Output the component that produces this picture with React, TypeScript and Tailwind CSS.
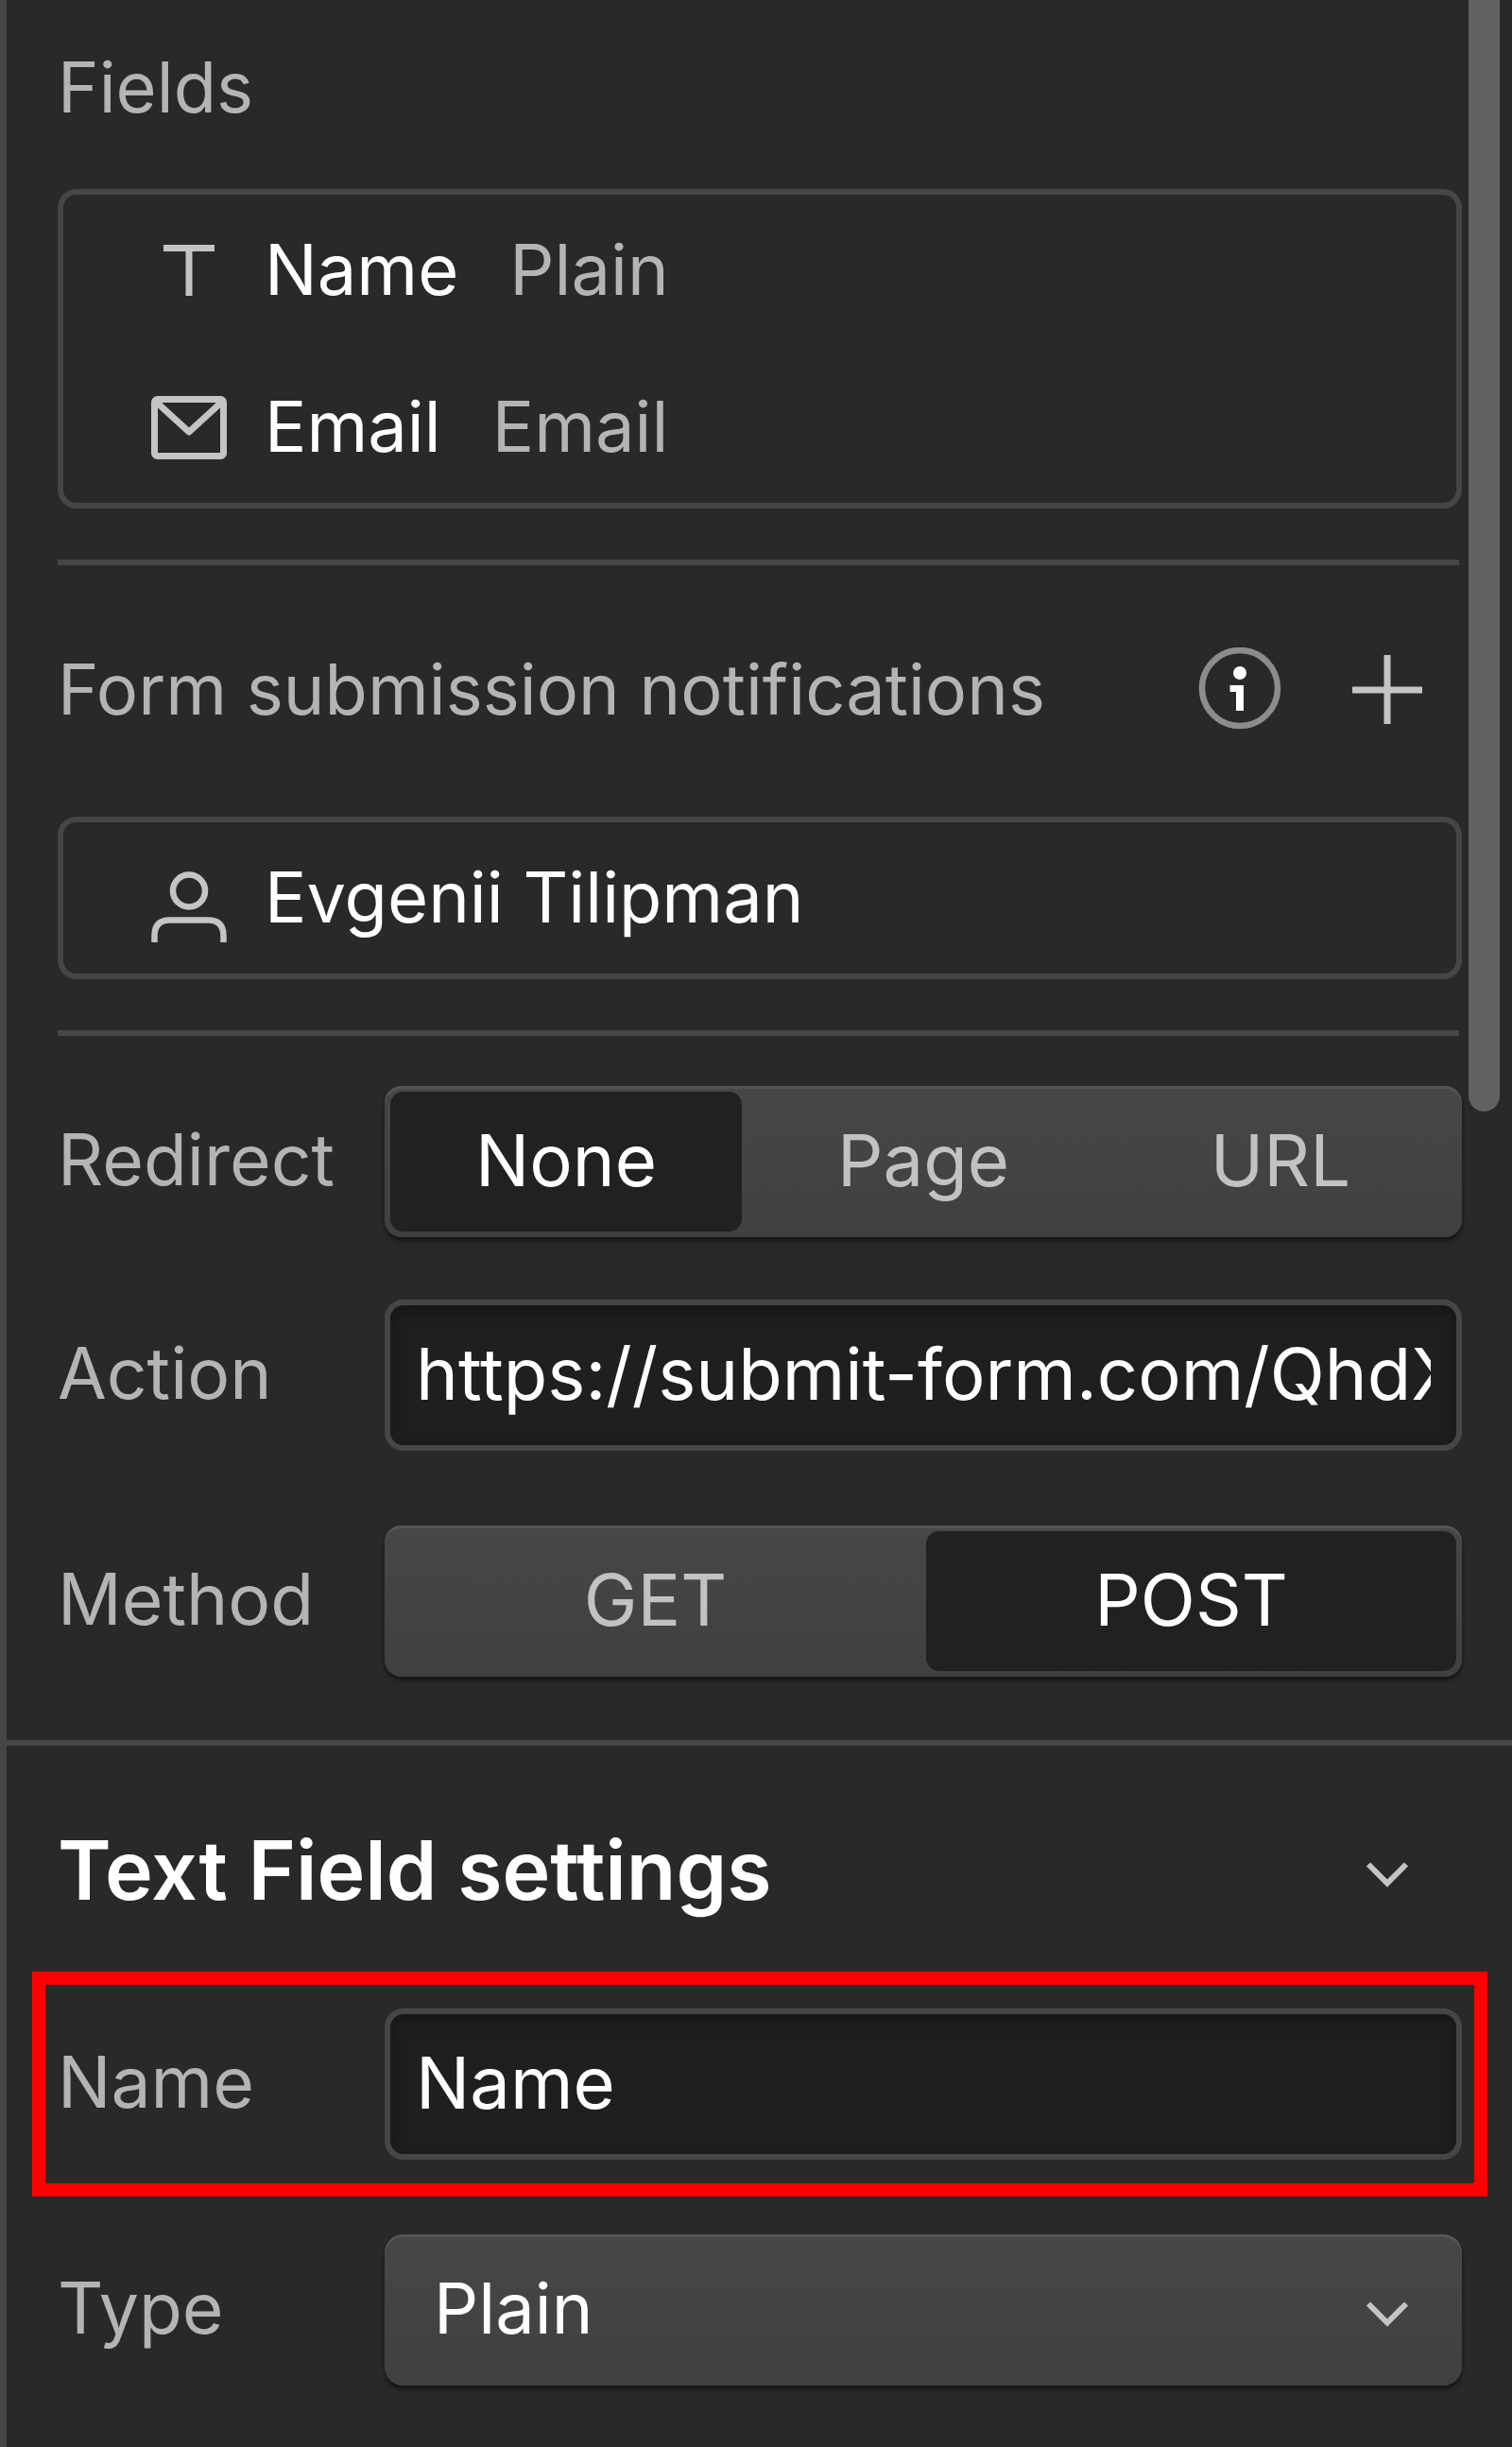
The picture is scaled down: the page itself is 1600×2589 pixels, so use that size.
import { useState } from "react";
import type { ReactNode } from "react";

const TypeIcon = () => (
  <svg width="80" height="96" viewBox="0 0 80 96" fill="#c4c4c4" aria-hidden="true">
    <rect x="13" y="22" width="54" height="7" />
    <rect x="36.5" y="22" width="7" height="54" />
  </svg>
);

const MailIcon = () => (
  <svg width="80" height="96" viewBox="0 0 80 96" fill="none" stroke="#c4c4c4" strokeWidth="7" aria-hidden="true">
    <rect x="3.5" y="19.5" width="73" height="60" rx="3" />
    <path d="M5 22 L40 54 L75 22" strokeLinejoin="round" />
  </svg>
);

const UserIcon = () => (
  <svg width="80" height="96" viewBox="0 0 80 96" fill="none" stroke="#c4c4c4" strokeWidth="6.5" aria-hidden="true">
    <circle cx="40" cy="41.5" r="17" />
    <path d="M3.5 96 V89 Q3.5 72.5 20 72.5 H60 Q76.5 72.5 76.5 89 V96" />
  </svg>
);

const InfoIcon = () => (
  <svg width="88" height="88" viewBox="0 0 88 88" aria-hidden="true">
    <circle cx="44" cy="43" r="40" fill="none" stroke="#8c8c8c" strokeWidth="6.5" />
    <circle cx="44" cy="27" r="7" fill="#fff" />
    <path d="M33.5 40 H48 V67 H40 V47 H33.5 Z" fill="#fff" />
  </svg>
);

const PlusIcon = () => (
  <svg width="74" height="74" viewBox="0 0 74 74" fill="none" stroke="#c4c4c4" strokeWidth="7" aria-hidden="true">
    <path d="M0 38 H74 M37 1 V74" />
  </svg>
);

const ChevronIcon = () => (
  <svg width="46" height="38" viewBox="0 0 46 38" fill="none" stroke="#c4c4c4" strokeWidth="6" aria-hidden="true">
    <path d="M3 12.5 L23 32.5 L43 12.5" />
  </svg>
);

const List = ({ children }: { children: ReactNode }) => (
  <ul className="rounded-[20px] pt-0.5 pb-1 shadow-[inset_0_0_0_6px_#464646]">{children}</ul>
);

const ListItem = ({ icon, name, type }: { icon: ReactNode; name: string; type?: string }) => (
  <li className="flex h-[166px] items-center pl-[99px]">
    {icon}
    <span className="ml-10 text-white">{name}</span>
    {type && <span className="ml-[54px]">{type}</span>}
  </li>
);

const Divider = () => <hr className="mt-[54px] mr-[3px] border-t-6 border-[#464646]" />;

interface FieldRowProps {
  label: string;
  htmlFor?: string;
  children: ReactNode;
}

const FieldRow = ({ label, htmlFor, children }: FieldRowProps) => (
  <div className="flex items-center">
    {htmlFor ? (
      <label htmlFor={htmlFor} className="w-[346px] shrink-0 pb-1 text-[75px]">
        {label}
      </label>
    ) : (
      <span className="w-[346px] shrink-0 pb-1 text-[75px]">{label}</span>
    )}
    {children}
  </div>
);

interface SegmentedProps {
  label: string;
  options: string[];
  value: string;
  onChange: (value: string) => void;
}

const Segmented = ({ label, options, value, onChange }: SegmentedProps) => (
  <div
    role="group"
    aria-label={label}
    className="flex h-40 min-w-0 flex-1 gap-1.5 rounded-[18px] bg-linear-to-b from-[#474747] to-[#404040] p-1.5 text-[76px] shadow-[inset_0_3px_0_#555555,0_4px_4px_#161616]"
  >
    {options.map((option) => (
      <button
        key={option}
        type="button"
        aria-pressed={option === value}
        onClick={() => onChange(option)}
        className={
          option === value
            ? "flex-1 rounded-[14px] bg-[#212121] pb-1 text-white"
            : "flex-1 rounded-[14px] pb-1 text-[#c2c2c2]"
        }
      >
        {option}
      </button>
    ))}
  </div>
);

const TextInput = ({ id, defaultValue }: { id: string; defaultValue: string }) => (
  <input
    id={id}
    type="text"
    defaultValue={defaultValue}
    className="h-40 min-w-0 flex-1 rounded-[20px] border-6 border-[#464646] bg-[#1f1f1f] px-[27px] pb-1 text-[76px] text-white shadow-[inset_0_6px_16px_#161616] outline-none"
  />
);

const App = () => {
  const [redirect, setRedirect] = useState("None");
  const [method, setMethod] = useState("POST");

  return (
    <main className="relative min-h-screen border-l-7 border-[#464646] bg-[#292929] font-['Inter',sans-serif] text-[74px] leading-[96px] text-[#b4b4b4]">
      {/* scrollbar thumb */}
      <div className="absolute top-0 right-[13px] h-[1176px] w-[33px] rounded-b-full bg-[#616161]" />

      <section className="border-b-6 border-[#464646] pr-[53px] pb-[67px] pl-[54px]">
        <h2 className="mb-4 flex h-[184px] items-center">Fields</h2>
        <List>
          <ListItem icon={<TypeIcon />} name="Name" type="Plain" />
          <ListItem icon={<MailIcon />} name="Email" type="Email" />
        </List>
        <Divider />

        <div className="mb-1 flex h-[262px] items-center pr-[42px]">
          <h2 className="flex-1">Form submission notifications</h2>
          <button type="button" aria-label="About notifications">
            <InfoIcon />
          </button>
          <button type="button" aria-label="Add notification" className="ml-[75px]">
            <PlusIcon />
          </button>
        </div>
        <List>
          <ListItem icon={<UserIcon />} name="Evgenii Tilipman" />
        </List>
        <Divider />

        <div className="mt-[53px] flex flex-col">
          <FieldRow label="Redirect">
            <Segmented
              label="Redirect"
              options={["None", "Page", "URL"]}
              value={redirect}
              onChange={setRedirect}
            />
          </FieldRow>
          <div className="mt-[66px] mb-[79px]">
            <FieldRow label="Action" htmlFor="action">
              <TextInput id="action" defaultValue="https://submit-form.com/QhdX" />
            </FieldRow>
          </div>
          <FieldRow label="Method">
            <Segmented
              label="Method"
              options={["GET", "POST"]}
              value={method}
              onChange={setMethod}
            />
          </FieldRow>
        </div>
      </section>

      <section className="pr-[53px] pb-16 pl-[54px]">
        <div className="flex h-[239px] items-center justify-between pt-6 pr-14">
          <h2 className="text-[86px] font-semibold text-white">Text Field settings</h2>
          <button type="button" aria-label="Collapse section">
            <ChevronIcon />
          </button>
        </div>

        <div className="-mx-[27px] border-14 border-[#ff0000] px-[13px] py-[25px]">
          <FieldRow label="Name" htmlFor="name">
            <TextInput id="name" defaultValue="Name" />
          </FieldRow>
        </div>

        <div className="mt-10">
          <FieldRow label="Type" htmlFor="type">
            <div className="relative min-w-0 flex-1">
              <select
                id="type"
                defaultValue="Plain"
                className="block h-40 w-full appearance-none rounded-[20px] bg-linear-to-b from-[#474747] to-[#404040] px-[52px] pb-1 text-white shadow-[inset_0_3px_0_#555555,0_4px_4px_#161616] outline-none"
              >
                <option>Plain</option>
                <option>Email</option>
              </select>
              <span className="pointer-events-none absolute inset-y-0 right-14 flex items-center">
                <ChevronIcon />
              </span>
            </div>
          </FieldRow>
        </div>
      </section>
    </main>
  );
};

export default App;
